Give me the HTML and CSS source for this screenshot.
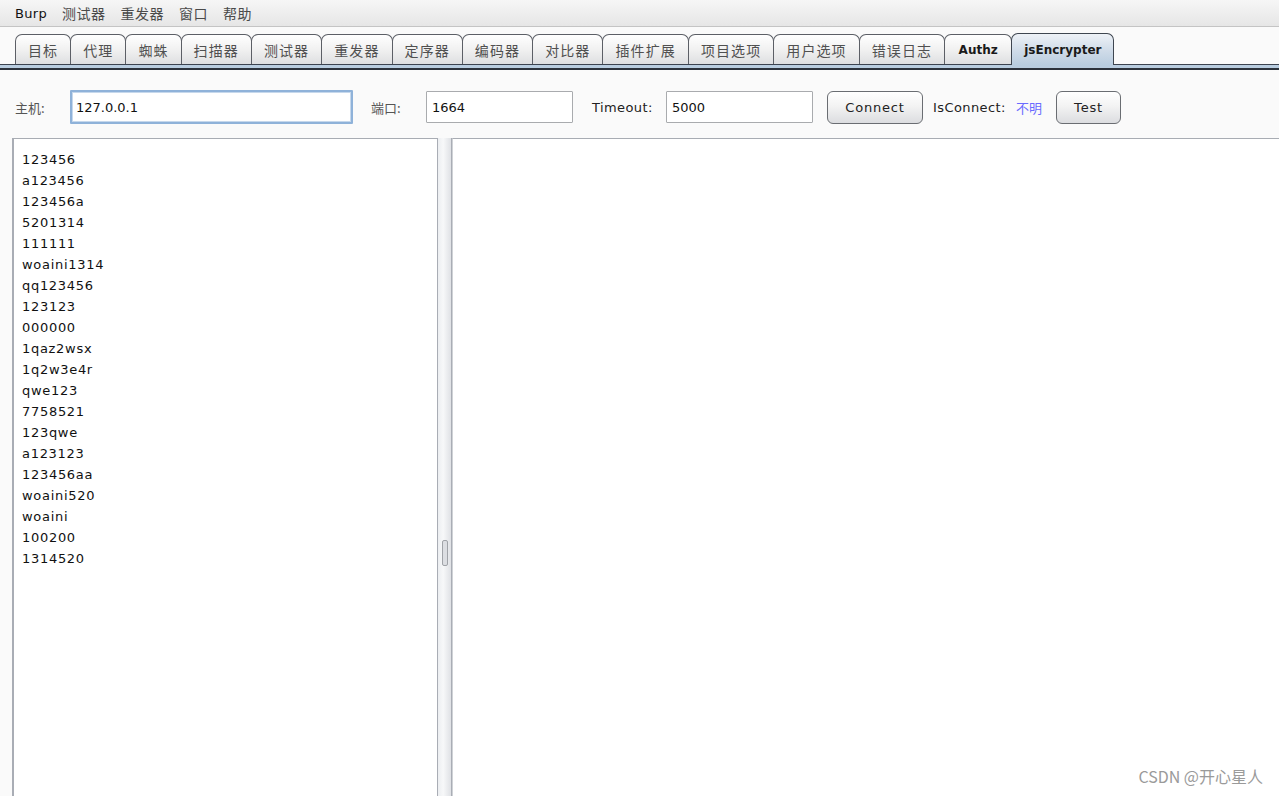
FILE: index.html
```html
<!DOCTYPE html>
<html lang="zh">
<head>
    <meta charset="UTF-8">
    <meta name="viewport" content="width=device-width, initial-scale=1.0">
    <title>Burp Suite - jsEncrypter</title>
    <link rel="stylesheet" href="styles.css">
</head>
<body>
    <nav class="menubar">
        <span class="menu-item menu-burp">Burp</span>
        <span class="menu-item">测试器</span>
        <span class="menu-item">重发器</span>
        <span class="menu-item">窗口</span>
        <span class="menu-item">帮助</span>
    </nav>

    <div class="tabs">
        <div class="tab">目标</div>
        <div class="tab">代理</div>
        <div class="tab">蜘蛛</div>
        <div class="tab">扫描器</div>
        <div class="tab">测试器</div>
        <div class="tab">重发器</div>
        <div class="tab">定序器</div>
        <div class="tab">编码器</div>
        <div class="tab">对比器</div>
        <div class="tab">插件扩展</div>
        <div class="tab">项目选项</div>
        <div class="tab">用户选项</div>
        <div class="tab">错误日志</div>
        <div class="tab tab-latin tab-authz">Authz</div>
        <div class="tab tab-latin active">jsEncrypter</div>
    </div>
    <div class="tab-band"></div>

    <main class="content">
        <form class="conn-form">
            <label class="lbl lbl-host" for="host">主机:</label>
            <input type="text" id="host" class="field field-host focused" value="127.0.0.1">
            <label class="lbl lbl-port" for="port">端口:</label>
            <input type="text" id="port" class="field field-port" value="1664">
            <label class="lbl lbl-latin lbl-timeout" for="timeout">Timeout:</label>
            <input type="text" id="timeout" class="field field-timeout" value="5000">
            <button type="button" class="btn btn-connect">Connect</button>
            <span class="lbl lbl-latin lbl-status">IsConnect:</span>
            <span class="status">不明</span>
            <button type="button" class="btn btn-test">Test</button>
        </form>

        <div class="split">
            <div class="pane pane-left">
                <div class="wordlist">
                    <div>123456</div>
                    <div>a123456</div>
                    <div>123456a</div>
                    <div>5201314</div>
                    <div>111111</div>
                    <div>woaini1314</div>
                    <div>qq123456</div>
                    <div>123123</div>
                    <div>000000</div>
                    <div>1qaz2wsx</div>
                    <div>1q2w3e4r</div>
                    <div>qwe123</div>
                    <div>7758521</div>
                    <div>123qwe</div>
                    <div>a123123</div>
                    <div>123456aa</div>
                    <div>woaini520</div>
                    <div>woaini</div>
                    <div>100200</div>
                    <div>1314520</div>
                </div>
            </div>
            <div class="divider"><span class="grip"></span></div>
            <div class="pane pane-right"></div>
        </div>
    </main>

    <div class="watermark">CSDN @开心星人</div>
</body>
</html>
```

FILE: styles.css
```css
body {
    margin: 0;
    padding: 0;
    background-color: #fafafa;
    font-family: "DejaVu Sans", "Noto Sans CJK SC", sans-serif;
    font-size: 13px;
    color: #222;
    height: 796px;
    overflow: hidden;
    position: relative;
}

/* menu */
.menubar {
    height: 26px;
    display: flex;
    align-items: center;
    gap: 15px;
    padding-left: 15px;
    background: linear-gradient(#f6f6f6, #e6e6e6);
    border-bottom: 1px solid #c4c4c4;
}
.menu-item {
    font-family: "Noto Sans CJK SC", sans-serif;
    font-size: 14px;
    letter-spacing: 0.5px;
    color: #4a4a4a;
}
.menu-burp {
    font-family: "DejaVu Sans", sans-serif;
    font-size: 13px;
    letter-spacing: 0.3px;
    color: #111;
}

/* tabs */
.tabs {
    display: flex;
    align-items: flex-end;
    height: 31px;
    margin-top: 6px;
    padding-left: 15px;
}
.tab {
    height: 30px;
    box-sizing: border-box;
    padding: 0 12px;
    margin-right: -1px;
    display: flex;
    align-items: center;
    font-family: "Noto Sans CJK SC", sans-serif;
    font-size: 14px;
    letter-spacing: 1.1px;
    color: #505050;
    border: 1px solid #5c5f66;
    border-bottom: none;
    border-radius: 7px 7px 0 0;
    background: linear-gradient(#ffffff, #f1f1f1 50%, #dedfe1);
}
.tab-latin {
    font-family: "DejaVu Sans", sans-serif;
    font-size: 12px;
    font-weight: bold;
    letter-spacing: 0;
    color: #1a1a1a;
    padding: 0 12px;
}
.tab-authz {
    padding: 0 13.5px;
}
.tab.active {
    position: relative;
    z-index: 1;
    height: 32px;
    margin-bottom: -1px;
    background: linear-gradient(#eef2f7, #cfdbe8 55%, #b9cde0);
    border-color: #3f4650;
}
.tab-band {
    height: 3px;
    background-color: #b9cde0;
    border-top: 1px solid #3c4350;
    border-bottom: 2px solid #2c323c;
}

/* connection form */
.content {
    display: flex;
    flex-direction: column;
}
.conn-form {
    display: flex;
    align-items: center;
    height: 34px;
    margin: 20px 0 0;
    padding-left: 15px;
}
.lbl {
    font-family: "Noto Sans CJK SC", sans-serif;
    font-size: 13px;
    color: #555;
}
.lbl-latin {
    font-family: "DejaVu Sans", sans-serif;
    color: #222;
    letter-spacing: 0.4px;
}
.field {
    box-sizing: border-box;
    height: 32px;
    border: 1px solid #a9abae;
    background: #fff;
    padding: 0 5px;
    font-family: "DejaVu Sans", sans-serif;
    font-size: 13px;
    color: #111;
    border-radius: 1px;
}
.field.focused {
    height: 34px;
    border: 2px solid #8fb2d9;
    box-shadow: inset 0 0 0 1px #c6d8ec;
    padding-left: 4px;
}
.lbl-host { width: 55px; }
.field-host { width: 283px; }
.lbl-port { margin-left: 18px; width: 55px; }
.field-port { width: 147px; }
.lbl-timeout { margin-left: 19px; width: 74px; }
.field-timeout { width: 147px; }
.btn {
    box-sizing: border-box;
    height: 33px;
    border: 1px solid #6a6d72;
    border-radius: 6px;
    background: linear-gradient(#ffffff, #f3f3f3 45%, #dcdde0);
    font-family: "DejaVu Sans", sans-serif;
    font-size: 13px;
    letter-spacing: 0.8px;
    color: #222;
    padding: 0;
}
.btn-connect { width: 96px; margin-left: 14px; }
.lbl-status { margin-left: 10px; width: 83px; }
.status {
    font-family: "Noto Sans CJK SC", sans-serif;
    font-size: 13px;
    color: #6b6bff;
    width: 40px;
}
.btn-test { width: 65px; }

/* split panes */
.split {
    display: flex;
    margin-top: 14px;
    height: 658px;
}
.pane {
    background: #fff;
    border-top: 1px solid #a8acb3;
}
.pane-left {
    margin-left: 12px;
    width: 423px;
    border-left: 2px solid #a9adb5;
    border-right: 1px solid #a9adb5;
}
.divider {
    width: 13px;
    background: linear-gradient(90deg, #eceef1, #f7f8f9 40%, #dfe1e5);
    border-right: 1px solid #a9adb5;
    position: relative;
}
.grip {
    position: absolute;
    left: 4px;
    top: 402px;
    width: 4px;
    height: 24px;
    border: 1px solid #a0a3a8;
    border-radius: 2px;
    background: #dcdee2;
}
.pane-right {
    flex: 1;
    border-left: 1px solid #cfd2d6;
}
.wordlist {
    padding: 10px 0 0 8px;
    font-family: "DejaVu Sans", sans-serif;
    font-size: 13px;
    letter-spacing: 0.7px;
    line-height: 21px;
    color: #111;
}

.watermark {
    position: absolute;
    right: 16px;
    bottom: 8px;
    font-family: "Noto Sans CJK SC", sans-serif;
    font-size: 16px;
    color: #9a9a9a;
}
```
